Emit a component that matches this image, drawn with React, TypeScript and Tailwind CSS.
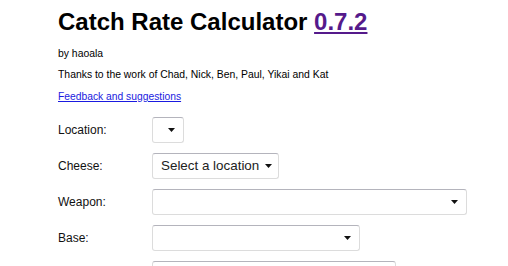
const rows = [
  { label: 'Location:', width: 'w-[32px]', text: '' },
  { label: 'Cheese:', width: 'w-[127px]', text: 'Select a location' },
  { label: 'Weapon:', width: 'w-[315px]', text: '' },
  { label: 'Base:', width: 'w-[208px]', text: '' },
  { label: '', width: 'w-[244px]', text: '' },
];

function Caret() {
  return (
    <svg width="7" height="4" viewBox="0 0 7 4" className="shrink-0">
      <polygon points="0,0 7,0 3.5,4" fill="#111" />
    </svg>
  );
}

function FakeSelect({ width, text }: { width: string; text: string }) {
  return (
    <div
      className={`${width} h-[26px] flex items-center justify-between gap-[6px] pl-[8px] pr-[8px] bg-white rounded-[3px] border border-[#dcdcdc] border-t-[#b4b4bc] text-[13.4px] text-[#222]`}
    >
      <span className="whitespace-nowrap">{text}</span>
      <Caret />
    </div>
  );
}

export default function App() {
  return (
    <div className="w-[508px] h-[266px] overflow-hidden bg-white pl-[58px] pt-[8px] text-black font-['Liberation_Sans',Arial,sans-serif]">
      <h1 className="text-[24px] leading-[28px] font-bold whitespace-nowrap">
        Catch Rate Calculator{' '}
        <a href="#" className="text-[#551a8b] underline">
          0.7.2
        </a>
      </h1>
      <p className="mt-[8px] text-[10.4px] leading-[20px]">by haoala</p>
      <p className="text-[10.4px] leading-[20px] mt-[1px]">
        Thanks to the work of Chad, Nick, Ben, Paul, Yikai and Kat
      </p>
      <p className="text-[10.3px] leading-[20px] mt-[2px]">
        <a href="#" className="text-[#1a1ae0] underline">
          Feedback and suggestions
        </a>
      </p>

      <div className="mt-[10px] flex flex-col gap-[10px]">
        {rows.map((row, i) => (
          <div key={i} className="flex items-center">
            <div className="w-[94px] text-[12px] text-[#111]">{row.label}</div>
            <FakeSelect width={row.width} text={row.text} />
          </div>
        ))}
      </div>
    </div>
  );
}
